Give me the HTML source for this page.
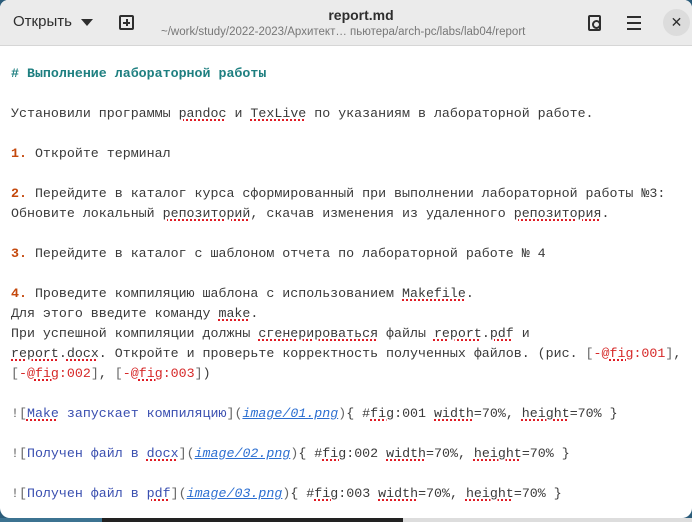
<!DOCTYPE html>
<html><head><meta charset="utf-8"><style>
*{margin:0;padding:0;box-sizing:border-box}
html,body{width:692px;height:522px;overflow:hidden;background:#2b5c7a}
.win{position:absolute;left:0;top:0;width:692px;height:518px;background:#fff;border-radius:8px 8px 10px 10px;overflow:hidden}
.bot{position:absolute;left:0;top:518px;width:692px;height:4px;background:#222}
.bot i{position:absolute;left:0;top:0;width:102px;height:4px;background:#3c7391}
.bot b{position:absolute;left:403px;top:0;width:289px;height:4px;background:#ddd}
.hdr{position:absolute;left:0;top:0;width:692px;height:46px;background:#ebebeb;border-bottom:1px solid #d6d6d6;font-family:"Liberation Sans","DejaVu Sans",sans-serif}
.open{position:absolute;left:13px;top:13px;font-size:15px;color:#2e2e2e}
.tri{position:absolute;left:81px;top:19px;width:0;height:0;border-left:6px solid transparent;border-right:6px solid transparent;border-top:7px solid #2e2e2e}
.plus{position:absolute;left:119px;top:15px;width:15px;height:15px;border:2px solid #2e2e2e;border-radius:2px}
.plus:before{content:"";position:absolute;left:5px;top:2px;width:2px;height:7px;background:#2e2e2e}
.plus:after{content:"";position:absolute;left:2px;top:5px;width:7px;height:2px;background:#2e2e2e}
.title{position:absolute;left:0;width:692px;top:7px;text-align:center;font-size:14px;font-weight:bold;color:#2e2e2e;padding-left:30px}
.path{position:absolute;left:161px;top:26px;font-size:11.5px;color:#777;white-space:nowrap}
.srch{position:absolute;left:588px;top:15px;width:13px;height:16px;border:2px solid #2e2e2e;border-radius:2px}
.srch:after{content:"";position:absolute;left:2px;top:3px;width:5px;height:5px;border:2px solid #2e2e2e;border-radius:50%}
.menu{position:absolute;left:627px;top:16px;width:14px}
.menu i{display:block;height:2px;background:#2e2e2e;margin-bottom:4px}
.close{position:absolute;left:663px;top:9px;width:27px;height:27px;border-radius:50%;background:#dcdcdc;text-align:center;line-height:27px;font-size:14px;font-weight:bold;color:#2e2e2e}
.txt{position:absolute;left:11px;top:64px;font-family:"Liberation Mono","DejaVu Sans Mono",monospace;font-size:13.3px;line-height:20px;color:#3a3a3a;white-space:pre}
.h{color:#1e7f80;font-weight:bold}
.n{color:#c4480c;font-weight:bold}
.s{text-decoration:underline dotted #e01b24;text-decoration-thickness:2px;text-underline-offset:2px}
.r{color:#d62828}
.l{color:#3a4fb0}
.u{color:#2c6fd1;font-style:italic;text-decoration:underline;text-decoration-color:#2c6fd1}
.g{color:#666}
</style></head><body>
<div class="win">
<div class="hdr">
<div class="open">Открыть</div><div class="tri"></div>
<div class="plus"></div>
<div class="title">report.md</div>
<div class="path">~/work/study/2022-2023/Архитект… пьютера/arch-pc/labs/lab04/report</div>
<div class="srch"></div>
<div class="menu"><i></i><i></i><i></i></div>
<div class="close">✕</div>
</div>
<div class="txt"><span class="h"># Выполнение лабораторной работы</span>

Установили программы <span class="s">pandoc</span> и <span class="s">TexLive</span> по указаниям в лабораторной работе.

<span class="n">1.</span> Откройте терминал

<span class="n">2.</span> Перейдите в каталог курса сформированный при выполнении лабораторной работы №3:
Обновите локальный <span class="s">репозиторий</span>, скачав изменения из удаленного <span class="s">репозитория</span>.

<span class="n">3.</span> Перейдите в каталог с шаблоном отчета по лабораторной работе № 4

<span class="n">4.</span> Проведите компиляцию шаблона с использованием <span class="s">Makefile</span>.
Для этого введите команду <span class="s">make</span>.
При успешной компиляции должны <span class="s">сгенерироваться</span> файлы <span class="s">report</span>.<span class="s">pdf</span> и
<span class="s">report</span>.<span class="s">docx</span>. Откройте и проверьте корректность полученных файлов. (рис. <span class="g">[</span><span class="r">-@<span class="s">fig</span>:001</span><span class="g">]</span>,
<span class="g">[</span><span class="r">-@<span class="s">fig</span>:002</span><span class="g">]</span>, <span class="g">[</span><span class="r">-@<span class="s">fig</span>:003</span><span class="g">]</span>)

<span class="g">![</span><span class="l"><span class="s">Make</span> запускает компиляцию</span><span class="g">](</span><span class="u">image/01.png</span><span class="g">)</span>{ #<span class="s">fig</span>:001 <span class="s">width</span>=70%, <span class="s">height</span>=70% }

<span class="g">![</span><span class="l">Получен файл в <span class="s">docx</span></span><span class="g">](</span><span class="u">image/02.png</span><span class="g">)</span>{ #<span class="s">fig</span>:002 <span class="s">width</span>=70%, <span class="s">height</span>=70% }

<span class="g">![</span><span class="l">Получен файл в <span class="s">pdf</span></span><span class="g">](</span><span class="u">image/03.png</span><span class="g">)</span>{ #<span class="s">fig</span>:003 <span class="s">width</span>=70%, <span class="s">height</span>=70% }</div>
</div>
<div class="bot"><i></i><b></b></div>
</body></html>
